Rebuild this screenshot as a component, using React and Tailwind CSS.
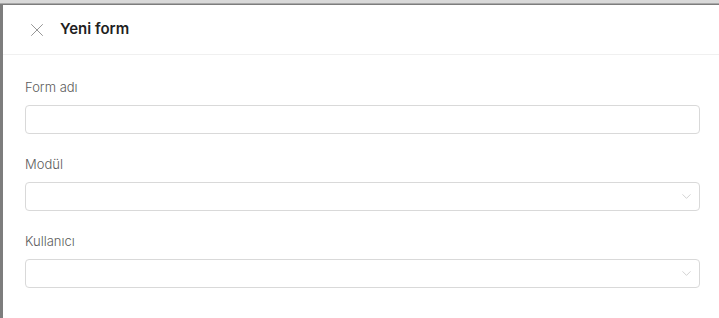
import { X, ChevronDown } from 'lucide-react'

function Field({ label, select }) {
  return (
    <div className="flex flex-col">
      <label className="text-[13px] text-[#5c5c5c] font-light leading-[18px] mb-[9px]">{label}</label>
      <div className="relative h-[29px] rounded-[4px] border border-[#d9d9d9] bg-white">
        {select && (
          <ChevronDown size={15} strokeWidth={1.1} className="absolute right-[5px] top-[6px] text-[#bfbfbf]" />
        )}
      </div>
    </div>
  )
}

export default function App() {
  return (
    <div className="w-[719px] h-[318px] bg-[#7d7d7d] flex flex-col overflow-hidden" style={{ fontFamily: 'Inter, "Open Sans", sans-serif' }}>
      <div className="h-[4px] bg-[#d9d9d9] border-b border-[#a8a8a8] shrink-0"></div>
      <div className="flex-1 ml-[3px] mt-[1px] bg-white flex flex-col">
        {/* Header */}
        <div className="h-[50px] flex items-center border-b border-[#f0f0f0] pl-[23px]">
          <X size={22} strokeWidth={1} className="text-[#8c8c8c]" />
          <h1 className="ml-[12px] text-[15px] font-semibold text-[#1f1f1f]">Yeni form</h1>
        </div>

        {/* Formulario */}
        <div className="pl-[22px] pr-[19px] pt-[23px] flex flex-col gap-[21px]">
          <Field label="Form adı" />
          <Field label="Modül" select />
          <Field label="Kullanıcı" select />
        </div>
      </div>
    </div>
  )
}
